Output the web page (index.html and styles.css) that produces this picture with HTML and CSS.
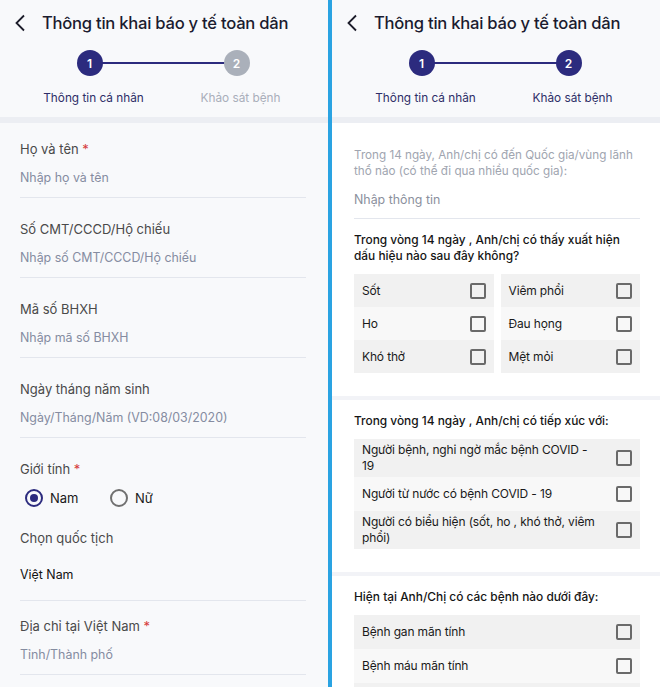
FILE: index.html
```html
<!DOCTYPE html>
<html lang="vi">
<head>
  <meta charset="UTF-8" />
  <meta name="viewport" content="width=device-width, initial-scale=1.0"/>
  <title>Thông tin khai báo y tế toàn dân</title>
  <link rel="stylesheet" href="styles.css">
</head>
<body>
  <div class="screens">

    <!-- Bước 1: thông tin cá nhân -->
    <section class="screen">
      <header class="head">
        <div class="topbar">
          <svg class="back" width="12" height="18" viewBox="0 0 12 18"><path d="M10 1.5L2.5 9l7.5 7.5" fill="none" stroke="#1c1c2a" stroke-width="1.8"/></svg>
          <h1>Thông tin khai báo y tế toàn dân</h1>
        </div>
        <div class="steps">
          <div class="step active"><span class="dot">1</span><span class="step-label">Thông tin cá nhân</span></div>
          <div class="step"><span class="dot">2</span><span class="step-label">Khảo sát bệnh</span></div>
        </div>
      </header>

      <div class="form">
        <div class="field">
          <div class="label">Họ và tên <span class="req">*</span></div>
          <div class="input">Nhập họ và tên</div>
        </div>
        <div class="field">
          <div class="label">Số CMT/CCCD/Hộ chiếu</div>
          <div class="input">Nhập số CMT/CCCD/Hộ chiếu</div>
        </div>
        <div class="field">
          <div class="label">Mã số BHXH</div>
          <div class="input">Nhập mã số BHXH</div>
        </div>
        <div class="field">
          <div class="label">Ngày tháng năm sinh</div>
          <div class="input">Ngày/Tháng/Năm (VD:08/03/2020)</div>
        </div>
        <div class="field field-radio">
          <div class="label">Giới tính <span class="req">*</span></div>
          <div class="radios">
            <span class="radio-opt"><span class="radio checked"></span>Nam</span>
            <span class="radio-opt"><span class="radio"></span>Nữ</span>
          </div>
        </div>
        <div class="field field-select">
          <div class="label">Chọn quốc tịch</div>
          <div class="input value">Việt Nam</div>
        </div>
        <div class="field field-addr">
          <div class="label">Địa chỉ tại Việt Nam <span class="req">*</span></div>
          <div class="input">Tỉnh/Thành phố</div>
        </div>
      </div>
    </section>

    <div class="divider"></div>

    <!-- Bước 2: khảo sát bệnh -->
    <section class="screen screen-survey">
      <header class="head">
        <div class="topbar">
          <svg class="back" width="12" height="18" viewBox="0 0 12 18"><path d="M10 1.5L2.5 9l7.5 7.5" fill="none" stroke="#1c1c2a" stroke-width="1.8"/></svg>
          <h1>Thông tin khai báo y tế toàn dân</h1>
        </div>
        <div class="steps">
          <div class="step active"><span class="dot">1</span><span class="step-label">Thông tin cá nhân</span></div>
          <div class="step active"><span class="dot">2</span><span class="step-label">Khảo sát bệnh</span></div>
        </div>
      </header>

      <div class="block">
        <p class="hint">Trong 14 ngày, Anh/chị có đến Quốc gia/vùng lãnh thổ nào (có thể đi qua nhiều quốc gia):</p>
        <div class="input">Nhập thông tin</div>

        <p class="question">Trong vòng 14 ngày , Anh/chị có thấy xuất hiện dấu hiệu nào sau đây không?</p>
        <div class="check-grid">
          <div class="check-row"><span>Sốt</span><span class="box"></span></div>
          <div class="check-row"><span>Viêm phổi</span><span class="box"></span></div>
          <div class="check-row alt"><span>Ho</span><span class="box"></span></div>
          <div class="check-row alt"><span>Đau họng</span><span class="box"></span></div>
          <div class="check-row"><span>Khó thở</span><span class="box"></span></div>
          <div class="check-row"><span>Mệt mỏi</span><span class="box"></span></div>
        </div>
      </div>

      <div class="block">
        <p class="question">Trong vòng 14 ngày , Anh/chị có tiếp xúc với:</p>
        <div class="check-list">
          <div class="check-row"><span>Người bệnh, nghi ngờ mắc bệnh COVID - 19</span><span class="box"></span></div>
          <div class="check-row alt"><span>Người từ nước có bệnh COVID - 19</span><span class="box"></span></div>
          <div class="check-row"><span>Người có biểu hiện (sốt, ho , khó thở, viêm phổi)</span><span class="box"></span></div>
        </div>
      </div>

      <div class="block">
        <p class="question">Hiện tại Anh/Chị có các bệnh nào dưới đây:</p>
        <div class="check-list">
          <div class="check-row"><span>Bệnh gan mãn tính</span><span class="box"></span></div>
          <div class="check-row alt"><span>Bệnh máu mãn tính</span><span class="box"></span></div>
          <div class="check-row"></div>
        </div>
      </div>
    </section>

  </div>
</body>
</html>
```

FILE: styles.css
```css
* { box-sizing: border-box; }
body {
  margin: 0;
  font-family: Inter, 'Noto Sans', sans-serif;
  color: #333;
  overflow: hidden;
}
.screens {
  display: flex;
  height: 687px;
}
.screen {
  width: 328px;
  background: #f8f9fb;
  overflow: hidden;
}
.screen-survey {
  background: #fff;
}
.divider {
  width: 4px;
  background: #2aa3e2;
}

/* шапка */
.head {
  background: #f8f9fb;
  border-bottom: 6px solid #eceef3;
  padding-bottom: 10px;
}
.topbar {
  height: 46px;
  display: flex;
  align-items: center;
  padding-left: 14px;
}
.back {
  margin-right: 16px;
}
h1 {
  margin: 0;
  font-size: 16.6px;
  font-weight: 500;
  color: #1b1b2f;
  letter-spacing: -0.25px;
}
.steps {
  display: flex;
  padding: 4px 18px 0 16px;
}
.step {
  flex: 1;
  display: flex;
  flex-direction: column;
  align-items: center;
  position: relative;
}
.step:first-child::after {
  content: "";
  position: absolute;
  top: 12px;
  left: calc(50% + 10px);
  width: 100%;
  height: 2px;
  background: #2c2b7e;
}
.dot {
  width: 26px;
  height: 26px;
  border-radius: 50%;
  background: #aab0ba;
  color: #fff;
  font-size: 12px;
  font-weight: 600;
  display: flex;
  align-items: center;
  justify-content: center;
  position: relative;
  z-index: 1;
}
.step.active .dot {
  background: #2c2b7e;
}
.step-label {
  margin-top: 13px;
  padding-left: 8px;
  font-size: 11.8px;
  line-height: 18px;
  color: #a9aeba;
}
.step.active .step-label {
  color: #2e2e68;
}

/* форма */
.form {
  padding: 16px 22px 0 20px;
}
.field {
  margin-bottom: 21px;
}
.label {
  font-size: 13px;
  line-height: 20px;
  color: #4a4a4a;
}
.req {
  color: #d63b3b;
}
.input {
  margin-top: 9px;
  padding-bottom: 9px;
  font-size: 12.4px;
  line-height: 20px;
  color: #858ca1;
  border-bottom: 1px solid #e3e6ed;
}
.input.value {
  margin-top: 17px;
  padding-bottom: 15px;
  color: #111;
}
.field-select {
  margin-bottom: 15px;
}
.field-radio {
  margin-bottom: 20px;
}
.radios {
  display: flex;
  margin-top: 9px;
  padding-left: 5px;
  height: 20px;
  align-items: center;
}
.radio-opt {
  display: flex;
  align-items: center;
  gap: 7px;
  width: 85px;
  font-size: 13px;
  color: #1a1a1a;
}
.radio {
  width: 18px;
  height: 18px;
  border-radius: 50%;
  border: 2px solid #707070;
  display: flex;
  align-items: center;
  justify-content: center;
}
.radio.checked {
  border-color: #2c2b7e;
}
.radio.checked::after {
  content: "";
  width: 8px;
  height: 8px;
  border-radius: 50%;
  background: #2c2b7e;
}

/* анкета */
.block {
  padding: 13px 20px 23px 22px;
  border-bottom: 4px solid #f2f3f7;
}
.block:first-of-type {
  padding-top: 24px;
}
.hint {
  margin: 0;
  font-size: 11.7px;
  line-height: 16px;
  color: #a0a5b0;
}
.block .input {
  margin-top: 11px;
  padding-bottom: 8px;
  color: #8b909d;
}
.question {
  margin: 0 0 10px;
  font-size: 11.9px;
  line-height: 16px;
  font-weight: 500;
  color: #151515;
}
.block .input + .question {
  margin-top: 13px;
}
.check-grid {
  display: grid;
  grid-template-columns: 1fr 1fr;
  column-gap: 7px;
}
.check-list .check-row {
  min-height: 34px;
}
.check-row {
  display: flex;
  align-items: center;
  justify-content: space-between;
  gap: 16px;
  min-height: 33px;
  padding: 3px 8px;
  background: #f1f1f1;
  font-size: 12px;
  letter-spacing: -0.15px;
  line-height: 16px;
  color: #1a1a1a;
}
.check-row.alt {
  background: #f8f8f8;
}
.box {
  flex: none;
  width: 16px;
  height: 16px;
  border: 2px solid #6a6a6a;
  border-radius: 2px;
}
```
